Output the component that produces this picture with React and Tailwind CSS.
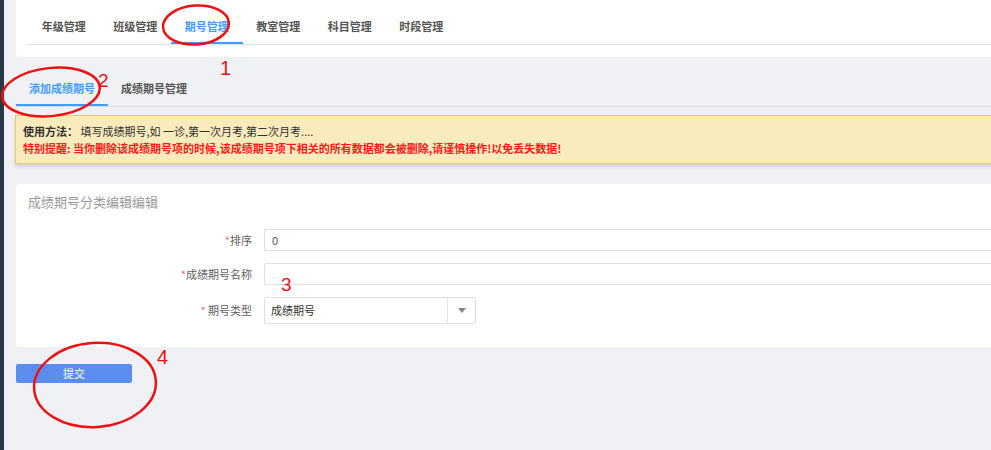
import React from "react";

const font = { fontFamily: '"Noto Sans CJK SC", "Noto Sans", sans-serif' };

function Tab({ label, active }) {
  return (
    <div className={`relative w-[71.5px] h-[44px] flex items-center justify-center text-[11px] font-semibold ${active ? "text-[#409eff]" : "text-[#555]"}`}>
      <span className="mt-[9px]">{label}</span>
      {active && <div className="absolute left-0 right-0 bottom-0 h-[2px] bg-[#409eff]" />}
    </div>
  );
}

function Row({ label, children, mt }) {
  return (
    <div className={`flex items-center ${mt}`}>
      <div className="w-[248px] text-right text-[11px] text-[#606266] pr-[12px]">
        <span className="text-[#f56c6c]">*</span>
        {label}
      </div>
      {children}
    </div>
  );
}

export default function App() {
  const tabs = ["年级管理", "班级管理", "期号管理", "教室管理", "科目管理", "时段管理"];
  return (
    <div className="relative w-[991px] h-[450px] overflow-hidden bg-[#f0f1f5] flex" style={font}>
      <div className="w-[4px] h-full bg-[#283747] shrink-0" />
      <div className="pl-[12px] w-[1010px] shrink-0">
        {/* top card */}
        <div className="bg-white rounded-b-[4px] h-[57px] pl-[12px]">
          <div className="flex border-b border-[#dcdfe6]">
            {tabs.map((t, i) => (
              <Tab key={t} label={t} active={i === 2} />
            ))}
          </div>
        </div>

        {/* sub tabs */}
        <div className="flex mt-[4px] border-b border-[#d9dadf]">
          <div className="relative w-[92px] h-[45px] flex items-center justify-center text-[11px] font-semibold text-[#409eff]">
            <span className="mt-[10px]">添加成绩期号</span>
            <div className="absolute left-0 right-0 bottom-0 h-[2px] bg-[#409eff]" />
          </div>
          <div className="w-[92px] h-[45px] flex items-center justify-center text-[11px] font-semibold text-[#555]">
            <span className="mt-[10px]">成绩期号管理</span>
          </div>
        </div>

        {/* alert */}
        <div className="mt-[8px] -ml-[1px] h-[49px] bg-[#f9ebbb] border border-[#efc46f] shadow-[0_3px_4px_rgba(0,0,0,0.12)] pl-[7px] pt-[7px] text-[11px] leading-[17px]">
          <div className="text-[#333]">
            <span className="font-bold">使用方法：</span> 填写成绩期号,如 一诊,第一次月考,第二次月考....
          </div>
          <div className="text-[#ff1a1a] font-bold">
            特别提醒: 当你删除该成绩期号项的时候,该成绩期号项下相关的所有数据都会被删除,请谨慎操作!以免丢失数据!
          </div>
        </div>

        {/* form card */}
        <div className="mt-[20px] bg-white rounded-[4px] h-[163px] pt-[8px]">
          <div className="pl-[12px] text-[13px] text-[#999] leading-[20px]">成绩期号分类编辑编辑</div>
          <div className="mt-[17px]">
            <Row label="排序" mt="">
              <div className="h-[22px] flex-1 border border-[#dcdfe6] rounded-[2px] pl-[7px] flex items-center text-[11px] text-[#555]">0</div>
            </Row>
            <Row label="成绩期号名称" mt="mt-[12px]">
              <div className="h-[22px] flex-1 border border-[#dcdfe6] rounded-[2px]" />
            </Row>
            <Row label=" 期号类型" mt="mt-[12px]">
              <div className="h-[27px] w-[212px] border border-[#dcdfe6] rounded-[2px] flex items-center">
                <div className="flex-1 pl-[6px] text-[11px] text-[#333]">成绩期号</div>
                <div className="w-[28px] h-full border-l border-[#e4e4e4] flex items-center justify-center">
                  <svg width="8" height="5" viewBox="0 0 8 5">
                    <path d="M0 0 L8 0 L4 5 Z" fill="#888" />
                  </svg>
                </div>
              </div>
            </Row>
          </div>
        </div>

        {/* submit */}
        <button className="mt-[17px] w-[116px] h-[19px] bg-[#5b8dee] rounded-[2px] text-white text-[11px] flex items-center justify-center">
          提交
        </button>
      </div>

      {/* annotations */}
      <svg className="absolute inset-0 pointer-events-none" width="991" height="450">
        <ellipse cx="196" cy="25" rx="33" ry="19.5" fill="none" stroke="#f01010" strokeWidth="2.5" transform="rotate(-4 196 25)" />
        <ellipse cx="51" cy="92" rx="49" ry="24" fill="none" stroke="#f01010" strokeWidth="2.5" transform="rotate(-6 51 92)" />
        <ellipse cx="95" cy="385" rx="61" ry="42" fill="none" stroke="#f01010" strokeWidth="2.5" transform="rotate(-4 95 385)" />
      </svg>
      <div className="absolute left-[220px] top-[58px] text-[20px] text-[#f01010] leading-none" style={{ fontFamily: '"Liberation Sans", sans-serif' }}>1</div>
      <div className="absolute left-[98px] top-[71px] text-[19px] text-[#f01010] leading-none" style={{ fontFamily: '"Liberation Sans", sans-serif' }}>2</div>
      <div className="absolute left-[281px] top-[275px] text-[19px] text-[#f01010] leading-none" style={{ fontFamily: '"Liberation Sans", sans-serif' }}>3</div>
      <div className="absolute left-[157px] top-[347px] text-[20px] text-[#f01010] leading-none" style={{ fontFamily: '"Liberation Sans", sans-serif' }}>4</div>
    </div>
  );
}
